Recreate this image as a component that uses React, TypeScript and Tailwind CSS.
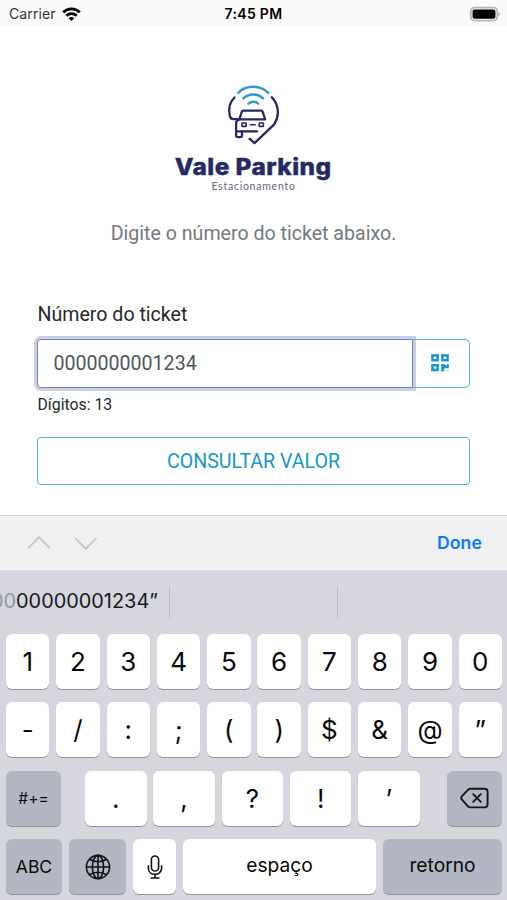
import React, { useState } from 'react';

const numberRow = ['1', '2', '3', '4', '5', '6', '7', '8', '9', '0'];
const symbolRow = ['-', '/', ':', ';', '(', ')', '$', '&', '@', '”'];
const punctuationRow = ['.', ',', '?', '!', '’'];

function StatusBar() {
  return (
    <div className="grid grid-cols-3 items-center h-[26px] px-[9px] bg-[#fafafa] text-black text-[14px] leading-[26px]">
      <div className="flex items-center gap-[6px] pt-px">
        <span className="text-[#333] tracking-[0.1px]">Carrier</span>
        <svg width="19" height="15" viewBox="0 0 19 15" fill="none" stroke="#000" strokeWidth="2.7">
          <path d="M1.2 5.3C6 .7 13 .7 17.8 5.3" />
          <path d="M4.3 8.7c3-2.8 7.4-2.8 10.4 0" />
          <path d="M6.6 11.2q2.9-2.2 5.8 0l-2.9 2.9z" fill="#000" stroke="none" />
        </svg>
      </div>
      <div className="text-center font-semibold pt-px tracking-[0.3px]">7:45 PM</div>
      <div className="flex justify-end -mr-[4px]">
        <svg width="33" height="16" viewBox="0 0 33 16">
          <rect x="1.8" y="1.6" width="26.5" height="13" rx="3.8" fill="#fafafa" stroke="#b8b8b8" strokeWidth="1.8" />
          <rect x="3.6" y="3.5" width="22.8" height="9.2" rx="1.8" fill="#000" />
          <path d="M29.5 5.8v4.5q3-2.2 0-4.5z" fill="#b0b0b0" />
        </svg>
      </div>
    </div>
  );
}

function Logo() {
  return (
    <div className="flex flex-col items-center">
      <svg width="70" height="70" viewBox="0 0 70 70" fill="none" strokeLinecap="round" strokeLinejoin="round">
        <g stroke="#2d9bd2" strokeWidth="2.4">
          <path d="M19.3 12.8C27 4.8 41 4.8 49.3 12.8" />
          <path d="M24.4 18.4c5.7-5.2 14.2-5.2 19.7 0" />
          <path d="M29.4 23.6c3-2.2 6.8-2.2 9.8 0" />
        </g>
        <g stroke="#232a66" strokeWidth="2.3">
          <path d="M15.5 17.5C11 22 9.3 29 10.7 35.5c.5 2.4 1.4 3.6 3.6 3.6h4.5" />
          <path d="M52.8 17.3c7.2 7.7 8 18.3 2.4 27L35.5 63.2l-5-4.5" />
          <path d="M24.2 30.7h18q1 0 1.4 1l2.6 7.6H20.3l2.5-7.6q.4-1 1.4-1z" />
          <path d="M20.3 39.3q-3.2 1-3.2 4v12q0 1.8 1.8 1.8h2.4q1.7 0 1.7-1.8v-3.9" />
          <path d="M17.3 51.4H38" />
          <path d="M31.4 44.8h4.8" strokeWidth="1.5" />
          <rect x="23" y="43" width="4.2" height="3.4" rx=".5" strokeWidth="1.6" />
          <rect x="40.2" y="43" width="4.2" height="3.4" rx=".5" strokeWidth="1.6" />
        </g>
      </svg>
      <h1 className="mt-[3px] text-[22.5px] leading-[27px] font-extrabold tracking-[0.4px] scale-x-[1.085] text-[#252a65] whitespace-nowrap [-webkit-text-stroke:0.4px_#252a65]">
        Vale Parking
      </h1>
      <p className="text-[10.5px] leading-[13px] tracking-[0.75px] text-[#62668c] font-[Lato]">Estacionamento</p>
    </div>
  );
}

function QrIcon() {
  return (
    <svg width="18" height="18" viewBox="0 0 18 18" fill="none" stroke="#1697ce" strokeWidth="2.5">
      <rect x="1.4" y="1.4" width="5.2" height="4.8" />
      <rect x="11.4" y="1.4" width="5.2" height="4.8" />
      <rect x="1.4" y="11.2" width="5.2" height="4.8" />
      <path d="M10.2 10h3.2l1.6 1.6h1V10h1.8v4.2h-4.2l-1.4 3.2h-2z" fill="#1697ce" stroke="none" />
      <path d="M13.3 16.6h1.5M16.2 16.6h1.5" stroke="#83c8e5" strokeWidth="1.4" />
    </svg>
  );
}

function Key({ className = '', dark = false, onClick, children }: {
  className?: string;
  dark?: boolean;
  onClick?: () => void;
  children: React.ReactNode;
}) {
  return (
    <button
      onClick={onClick}
      className={`flex items-center justify-center h-[55px] rounded-[6px] shadow-[0_1px_0.5px_#929399] text-[#080808] ${
        dark ? 'bg-[#b3b7c3]' : 'bg-white'
      } ${className}`}
    >
      {children}
    </button>
  );
}

export default function App() {
  const [ticket, setTicket] = useState('0000000001234');
  const press = (key: string) => setTicket(ticket + key);

  return (
    <div className="flex flex-col w-[507px] h-[900px] overflow-hidden bg-white font-[Inter,sans-serif]">
      <StatusBar />

      <main className="flex flex-col h-[489px] px-[37px] pt-[54px] font-[Roboto,sans-serif]">
        <div className="font-[Inter,sans-serif]">
          <Logo />
        </div>
        <p className="mt-[29px] text-center text-[19.6px] leading-[24px] text-[#747a80]">
          Digite o número do ticket abaixo.
        </p>
        <label className="mt-[57px] pl-[0.5px] text-[19.6px] leading-[24px] text-[#25292d]">Número do ticket</label>
        <div className="mt-[12px] flex h-[49px] w-[433px]">
          <input
            value={ticket}
            onChange={(e) => setTicket(e.target.value)}
            className="w-[376px] px-[15.5px] rounded-l-[4px] border-[1.5px] border-[#7582c3] bg-white text-[19.6px] text-[#50565b] outline-none shadow-[0_0_0_3px_#cccee2]"
          />
          <button className="flex flex-1 items-center justify-center rounded-r-[5px] border-[1.5px] border-l-0 border-[#4fb0da] pr-[2px] pb-[2px]">
            <QrIcon />
          </button>
        </div>
        <p className="mt-[7px] pl-[0.5px] text-[15.8px] leading-[20px] text-[#25292d]">Dígitos: 13</p>
        <button className="mt-[22px] h-[48px] w-[433px] rounded-[4px] border-[1.5px] border-[#4fb0da] pt-px text-[19.6px] text-[#1697ce]">
          CONSULTAR VALOR
        </button>
      </main>

      <div className="flex items-center justify-between h-[55px] border-t border-[#d1d1d3] bg-[#f0f0f1] pl-[27px] pr-[25px]">
        <svg width="71" height="18" viewBox="0 0 71 18" fill="none" stroke="#c2c2c4" strokeWidth="1.7">
          <path d="M1.2 14.2 12 3.2l10.8 11" />
          <path d="m48 4 10.8 10.7L69.5 4" />
        </svg>
        <span className="text-[17.6px] font-semibold tracking-[0.1px] text-[#087cff]">Done</span>
      </div>

      <div className="flex-1 bg-[#d5d6de]">
        <div className="flex items-center h-[63.5px]">
          <div className="flex h-[32px] w-[170px] items-center justify-end overflow-hidden border-r border-[#bfc0c7] pr-[11px] text-[19.9px] text-[#181819] whitespace-nowrap">
            <span className="text-[#94959a]">00</span>
            <span>00000001234”</span>
          </div>
          <div className="h-[32px] w-[168px] border-r border-[#bfc0c7]" />
        </div>

        <div className="flex flex-col gap-[13.6px] pl-[6px] pr-[5px]">
          {[numberRow, symbolRow].map((row, i) => (
            <div key={i} className="grid grid-cols-10 gap-[6.8px] text-[26px]">
              {row.map((key) => (
                <Key key={key} onClick={() => press(key)}>{key}</Key>
              ))}
            </div>
          ))}

          <div className="flex text-[26px]">
            <Key dark className="w-[55px] text-[15.5px]">#+=</Key>
            <div className="flex gap-[6.7px] ml-[24px] mr-auto">
              {punctuationRow.map((key) => (
                <Key key={key} className="w-[61.6px]" onClick={() => press(key)}>{key}</Key>
              ))}
            </div>
            <Key dark className="w-[55px]" onClick={() => setTicket(ticket.slice(0, -1))}>
              <svg width="30" height="24" viewBox="0 0 30 24" fill="none" stroke="#151619" strokeWidth="1.9" strokeLinecap="round" strokeLinejoin="round">
                <path d="M10.4 2.8h14q3.2 0 3.2 3.2v12.2q0 3.2-3.2 3.2h-14q-1.4 0-2.4-1l-6-6.7q-1.6-1.8 0-3.6L8 3.8q1-1 2.4-1z" />
                <path d="m13.2 8.2 7.6 7.6M20.8 8.2l-7.6 7.6" />
              </svg>
            </Key>
          </div>

          <div className="flex gap-[7px] text-[19.2px]">
            <Key dark className="w-[56px] text-[17.5px]">ABC</Key>
            <Key dark className="w-[57px]">
              <svg width="26" height="26" viewBox="0 0 26 26" fill="none" stroke="#111217" strokeWidth="1.6">
                <circle cx="13" cy="13" r="11.6" />
                <ellipse cx="13" cy="13" rx="5.6" ry="11.6" />
                <path d="M13 1.4v23.2M1.4 13h23.2M4.5 5.2q8.5 5 17 0M4.5 20.8q8.5-5 17 0" />
              </svg>
            </Key>
            <Key className="w-[43px]">
              <svg width="16" height="26" viewBox="0 0 16 26" fill="none" stroke="#111" strokeWidth="1.6" strokeLinecap="round">
                <rect x="4.4" y="2" width="7.2" height="15" rx="3.6" />
                <path d="M1.4 11.8v2.5c0 8 13.2 8 13.2 0v-2.5M8 20.4v3.5M4.1 24h7.8" />
              </svg>
            </Key>
            <Key className="w-[193px] pb-[2px]" onClick={() => press(' ')}>espaço</Key>
            <Key dark className="flex-1 pb-[2px]">retorno</Key>
          </div>
        </div>
      </div>
    </div>
  );
}
